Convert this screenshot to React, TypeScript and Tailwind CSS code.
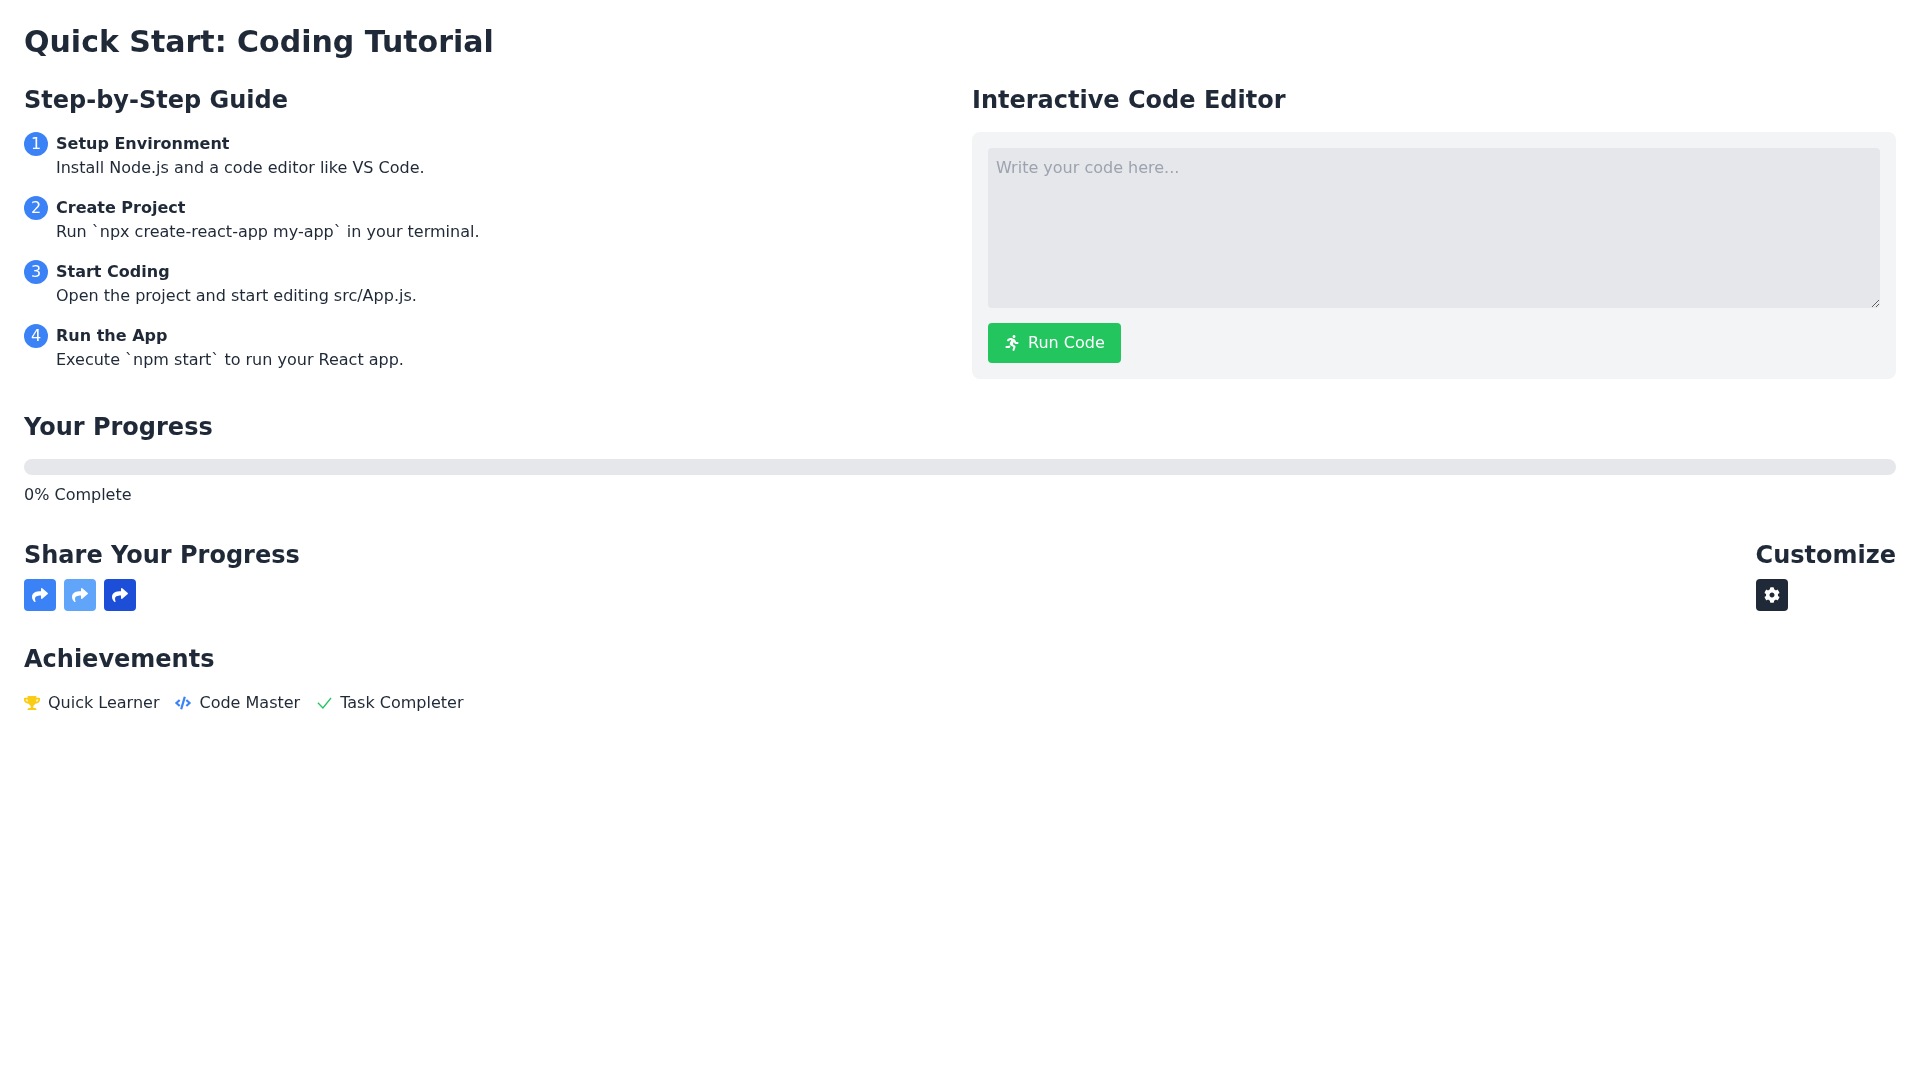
import { FaRunning, FaCog, FaTrophy, FaCode, FaShare } from "react-icons/fa";

const steps = [
  { title: "Setup Environment", desc: "Install Node.js and a code editor like VS Code." },
  { title: "Create Project", desc: "Run `npx create-react-app my-app` in your terminal." },
  { title: "Start Coding", desc: "Open the project and start editing src/App.js." },
  { title: "Run the App", desc: "Execute `npm start` to run your React app." },
];

export default function App() {
  return (
    <div className="min-h-screen p-6 text-[#1f2937] font-['DejaVu_Sans',sans-serif] will-change-transform">
      <h1 className="text-3xl font-bold mb-6">Quick Start: Coding Tutorial</h1>

      <div className="grid grid-cols-2 gap-6 mb-8">
        <div>
          <h2 className="text-2xl font-bold mb-4">Step-by-Step Guide</h2>
          <ol className="space-y-4">
            {steps.map((s, i) => (
              <li key={s.title} className="flex items-start">
                <span className="w-6 h-6 mr-2 rounded-full bg-[#3b82f6] text-white flex items-center justify-center">{i + 1}</span>
                <div>
                  <div className="font-bold">{s.title}</div>
                  <div>{s.desc}</div>
                </div>
              </li>
            ))}
          </ol>
        </div>
        <div>
          <h2 className="text-2xl font-bold mb-4">Interactive Code Editor</h2>
          <div className="bg-[#f3f4f6] rounded-lg p-4">
            <textarea
              className="block w-full h-40 p-2 bg-[#e5e7eb] rounded mb-[15px] placeholder:text-[#9ca3af]"
              placeholder="Write your code here..."
            />
            <button className="bg-[#22c55e] text-white px-4 py-2 rounded flex items-center">
              <FaRunning className="mr-2" />
              Run Code
            </button>
          </div>
        </div>
      </div>

      <div className="mb-8">
        <h2 className="text-2xl font-bold mb-4">Your Progress</h2>
        <div className="h-4 bg-[#e5e7eb] rounded-full" />
        <p className="mt-2">0% Complete</p>
      </div>

      <div className="flex justify-between mb-8">
        <div>
          <h2 className="text-2xl font-bold mb-2">Share Your Progress</h2>
          <div className="flex gap-2">
            <button className="bg-[#3b82f6] text-white p-2 rounded"><FaShare /></button>
            <button className="bg-[#60a5fa] text-white p-2 rounded"><FaShare /></button>
            <button className="bg-[#1d4ed8] text-white p-2 rounded"><FaShare /></button>
          </div>
        </div>
        <div>
          <h2 className="text-2xl font-bold mb-2">Customize</h2>
          <button className="bg-[#1f2937] text-white p-2 rounded"><FaCog /></button>
        </div>
      </div>

      <div>
        <h2 className="text-2xl font-bold mb-4">Achievements</h2>
        <div className="flex gap-4">
          <div className="flex items-center"><FaTrophy className="text-[#facc15] mr-2" />Quick Learner</div>
          <div className="flex items-center"><FaCode className="text-[#3b82f6] mr-2" />Code Master</div>
          <div className="flex items-center">
            <svg viewBox="0 0 16 16" className="w-4 h-4 mr-2 text-[#22c55e]" fill="none" stroke="currentColor" strokeWidth="1.3">
              <path d="M1.9 7.7 6.9 12.9 15 3" />
            </svg>
            Task Completer
          </div>
        </div>
      </div>
    </div>
  );
}
